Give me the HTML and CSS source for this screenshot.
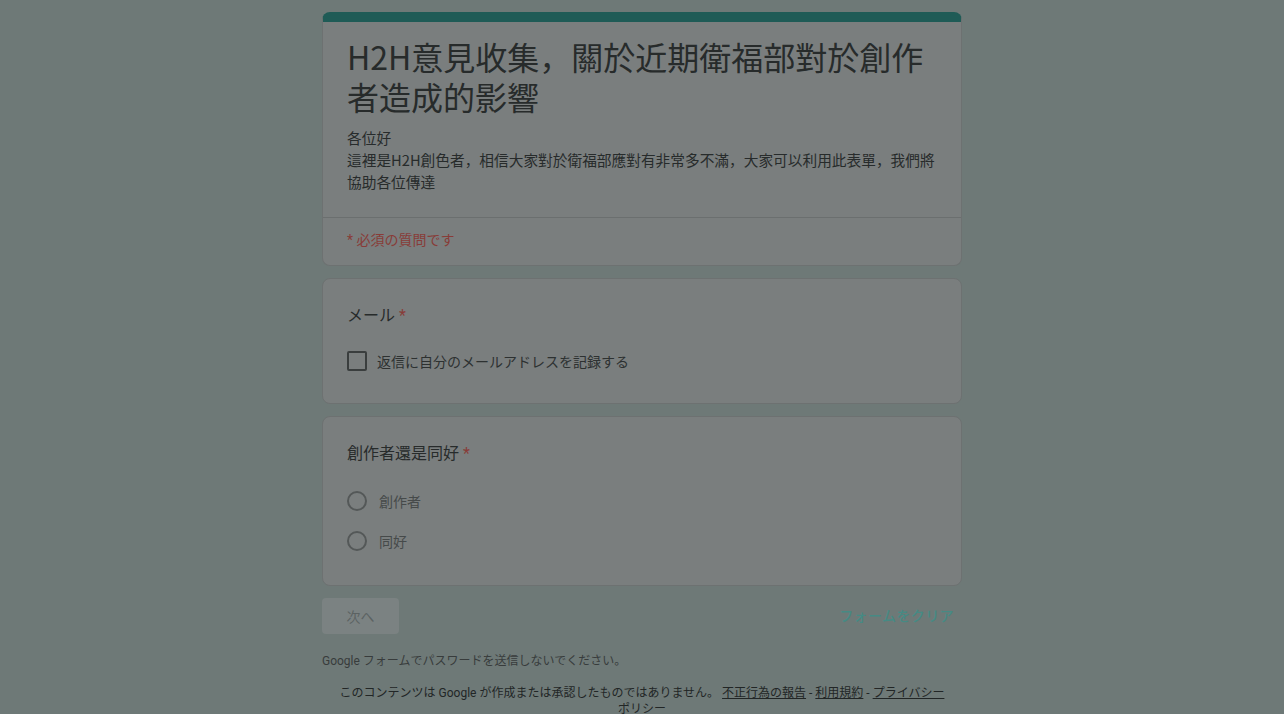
FILE: index.html
```html
<!DOCTYPE html>
<html lang="ja">
<head>
  <meta charset="UTF-8">
  <title>H2H意見收集</title>
  <link rel="stylesheet" href="styles.css">
</head>
<body>

  <div class="form-wrap">

    <!-- Header card -->
    <div class="card header-card">
      <div class="header-top">
        <h1 class="form-title">H2H意見收集，關於近期衛福部對於創作者造成的影響</h1>
        <div class="form-desc">各位好<br>這裡是H2H創色者，相信大家對於衛福部應對有非常多不滿，大家可以利用此表單，我們將協助各位傳達</div>
      </div>
      <div class="required-note">* 必須の質問です</div>
    </div>

    <!-- Email -->
    <div class="card question">
      <div class="q-title">メール <span class="star">*</span></div>
      <label class="check-row">
        <span class="checkbox"></span>
        <span>返信に自分のメールアドレスを記録する</span>
      </label>
    </div>

    <!-- Radio question -->
    <div class="card question">
      <div class="q-title">創作者還是同好 <span class="star">*</span></div>
      <div class="options">
        <label class="radio-row"><span class="radio"></span><span>創作者</span></label>
        <label class="radio-row"><span class="radio"></span><span>同好</span></label>
      </div>
    </div>

    <div class="actions">
      <button class="next-btn">次へ</button>
      <a class="clear-link">フォームをクリア</a>
    </div>

    <div class="pw-note">Google フォームでパスワードを送信しないでください。</div>

    <div class="footer">
      このコンテンツは Google が作成または承認したものではありません。 <a>不正行為の報告</a> - <a>利用規約</a> - <a>プライバシーポリシー</a>
    </div>

  </div>

</body>
</html>
```

FILE: styles.css
```css
body {
  margin: 0;
  background: #6e7977;
  font-family: Roboto, "Noto Sans CJK JP", "Noto Sans CJK TC", sans-serif;
  color: #2a2e2e;
}
.form-wrap {
  width: 640px;
  margin: 12px auto 0;
}
.card {
  background: #7a7e7e;
  border: 1px solid #6d7171;
  border-radius: 8px;
  margin-bottom: 12px;
}
.header-card {
  border-top: 10px solid #1f5b56;
}
.header-top {
  padding: 14px 24px 24px;
  border-bottom: 1px solid #6b6f6f;
}
.form-title {
  margin: 0;
  font-family: "Noto Sans CJK TC", sans-serif;
  font-size: 32px;
  line-height: 40px;
  font-weight: 400;
  color: #272b2b;
}
.form-desc {
  margin-top: 11px;
  font-size: 14.7px;
  line-height: 22px;
  font-family: "Noto Sans CJK TC", sans-serif;
  color: #272b2b;
}
.required-note {
  padding: 12px 24px 15px;
  font-size: 14px;
  line-height: 20px;
  color: #883c38;
}
.question {
  padding: 25px 24px 24px;
}
.q-title {
  font-size: 16px;
  line-height: 24px;
  color: #272b2b;
}
.star {
  color: #883c38;
}
.check-row {
  display: flex;
  align-items: center;
  margin-top: 23px;
  margin-bottom: 8px;
  font-size: 14px;
  color: #2d3131;
}
.checkbox {
  width: 16px;
  height: 16px;
  border: 2px solid #3a3e3e;
  border-radius: 2px;
  margin-right: 10px;
}
.options {
  margin-top: 15px;
}
.radio-row {
  display: flex;
  align-items: center;
  height: 40px;
  font-size: 14px;
  color: #464a4a;
}
.radio {
  width: 16px;
  height: 16px;
  border: 2px solid #545858;
  border-radius: 50%;
  margin-right: 12px;
}
.actions {
  display: flex;
  justify-content: space-between;
  align-items: center;
  margin-top: 12px;
}
.next-btn {
  width: 77px;
  height: 36px;
  background: #7b8282;
  border: none;
  border-radius: 4px;
  font-family: "Noto Sans CJK JP", sans-serif;
  font-size: 14px;
  color: #5c6262;
}
.clear-link {
  margin-right: 8px;
  margin-bottom: 3px;
  font-family: "Noto Sans CJK JP", sans-serif;
  font-size: 14px;
  font-weight: 500;
  letter-spacing: 0.4px;
  color: #468a84;
}
.pw-note {
  margin-top: 19px;
  font-size: 12px;
  line-height: 16px;
  color: #383c3c;
}
.footer {
  margin-top: 16px;
  text-align: center;
  font-size: 12px;
  line-height: 16px;
  padding: 0 16px;
  color: #222626;
}
.footer a {
  color: #222626;
  text-decoration: underline;
}
```
